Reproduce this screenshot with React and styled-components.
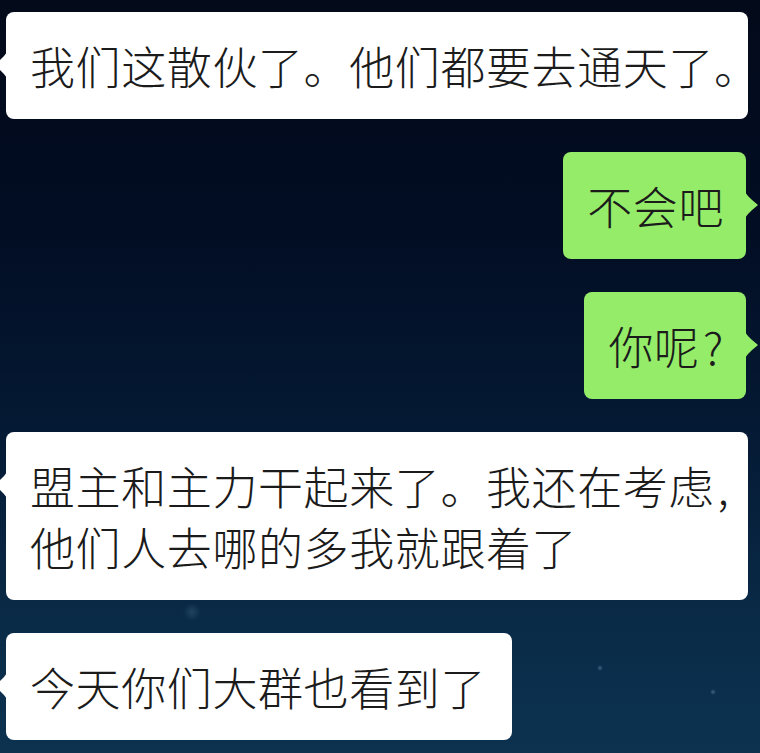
import styled, { createGlobalStyle } from 'styled-components'

const GlobalStyle = createGlobalStyle`
  html, body {
    margin: 0;
    padding: 0;
  }
  body {
    background: #030a1a;
  }
`

const messages = [
  { from: 'them', text: '我们这散伙了。他们都要去通天了。' },
  { from: 'me', text: '不会吧' },
  { from: 'me', text: '你呢\u200a?' },
  { from: 'them', text: '盟主和主力干起来了。我还在考虑\u200a,\n他们人去哪的多我就跟着了' },
  { from: 'them', text: '今天你们大群也看到了' },
]

const Chat = () => {
  return (
    <>
      <GlobalStyle />
      <Screen>
        {messages.map((m, i) => (
          <Row key={i} $mine={m.from === 'me'}>
            <Bubble $mine={m.from === 'me'}>
              <Tail $mine={m.from === 'me'} viewBox="0 0 13 26" width="13" height="26">
                <path d="M0 0 Q2.5 4 6.5 7.5 L13 13 L6.5 18.5 Q2.5 22 0 26 Z" />
              </Tail>
              {m.text}
            </Bubble>
          </Row>
        ))}
      </Screen>
    </>
  )
}

const Screen = styled.div`
  min-height: 100vh;
  box-sizing: border-box;
  padding-top: 12px;
  display: flex;
  flex-direction: column;
  gap: 33px;
  overflow: hidden;
  background:
    radial-gradient(circle at 192px 612px, rgba(140, 180, 215, 0.18) 0, rgba(140, 180, 215, 0) 9px),
    radial-gradient(circle at 600px 668px, rgba(170, 200, 230, 0.35) 0, rgba(170, 200, 230, 0) 3px),
    radial-gradient(circle at 713px 692px, rgba(170, 200, 230, 0.35) 0, rgba(170, 200, 230, 0) 3px),
    linear-gradient(180deg, #030a1a 0%, #020d23 30%, #051b36 60%, #0a2c49 85%, #0c3250 100%);
`

const Row = styled.div`
  display: flex;
  justify-content: ${p => (p.$mine ? 'flex-end' : 'flex-start')};
  padding: ${p => (p.$mine ? '0 14px 0 0' : '0 0 0 6px')};
`

const Bubble = styled.div`
  position: relative;
  box-sizing: border-box;
  max-width: 742px;
  padding: ${p => (p.$mine ? '23px 22px 23px 24px' : '23px 26px 23px 24px')};
  border-radius: 8px;
  background: ${p => (p.$mine ? '#95ec69' : '#ffffff')};
  color: #1b1b1b;
  font-family: "Noto Sans CJK SC", "Noto Sans", sans-serif;
  font-size: 45px;
  font-weight: 300;
  letter-spacing: 0.6px;
  line-height: 61px;
  white-space: pre;
`

const Tail = styled.svg`
  position: absolute;
  top: 40px;
  ${p => (p.$mine ? 'right: -12px;' : 'left: -12px; transform: scaleX(-1);')}
  fill: ${p => (p.$mine ? '#95ec69' : '#ffffff')};
`

export default Chat
